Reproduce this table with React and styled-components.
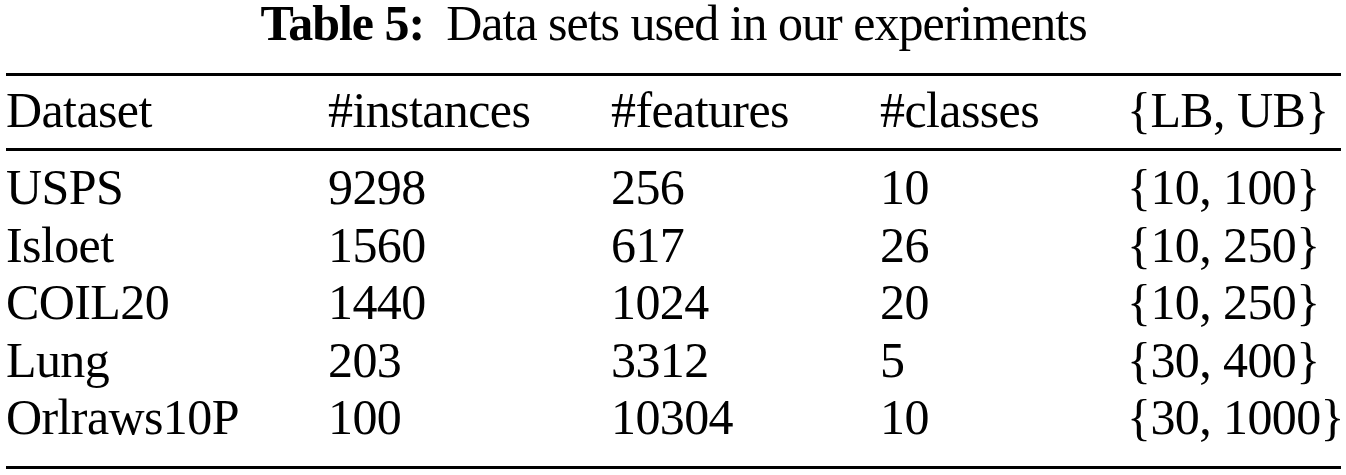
import React from 'react';
import styled, { createGlobalStyle } from 'styled-components';

const rows = [
    ['USPS', '9298', '256', '10', '{10, 100}'],
    ['Isloet', '1560', '617', '26', '{10, 250}'],
    ['COIL20', '1440', '1024', '20', '{10, 250}'],
    ['Lung', '203', '3312', '5', '{30, 400}'],
    ['Orlraws10P', '100', '10304', '10', '{30, 1000}'],
];

const header = ['Dataset', '#instances', '#features', '#classes', '{LB, UB}'];

export default () => (
    <Page>
        <GlobalStyle />
        <Caption>
            <CaptionLabel>Table 5:</CaptionLabel>
            Data sets used in our experiments
        </Caption>
        <Table>
            <HeadRow>
                {header.map(h => <Cell key={h}>{h}</Cell>)}
            </HeadRow>
            <Body>
                {
                    rows.map(r => (
                        <Row key={r[0]}>
                            {r.map((c, i) => <Cell key={i}>{c}</Cell>)}
                        </Row>
                    ))
                }
            </Body>
        </Table>
    </Page>
);

const GlobalStyle = createGlobalStyle`
    body {
        margin: 0;
        background: #fff;
    }
`;

const Page = styled.div`
    width: 1346px;
    padding: 0 5px 0 6px;
    box-sizing: border-box;
    font-family: "Liberation Serif", "Times New Roman", serif;
    font-size: 50px;
    color: #000;
`;

const Caption = styled.div`
    text-align: center;
    line-height: 46px;
    margin: 0 0 27px;
    letter-spacing: -1px;
    white-space: nowrap;
`;

const CaptionLabel = styled.span`
    font-weight: bold;
    margin-right: 22px;
`;

const Table = styled.div`
    border-top: 3px solid #000;
    border-bottom: 3px solid #000;
    letter-spacing: -0.6px;
`;

const HeadRow = styled.div`
    display: grid;
    grid-template-columns: 322px 283px 269px 247px 1fr;
    line-height: 58px;
    padding: 5px 0 9px;
    border-bottom: 3px solid #000;
`;

const Body = styled.div`
    padding: 8px 0 19.5px;
`;

const Row = styled.div`
    display: grid;
    grid-template-columns: 322px 283px 269px 247px 1fr;
    line-height: 57.5px;
`;

const Cell = styled.div`
    white-space: nowrap;
`;
